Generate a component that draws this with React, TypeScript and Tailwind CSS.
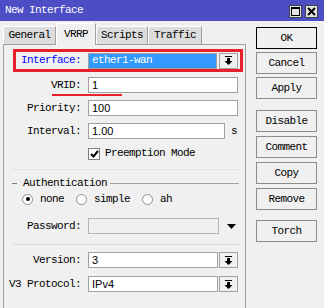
import React from 'react';

const mono = "font-['Liberation_Mono',monospace] text-[11px] tracking-[-0.6px]";
const sans = "font-['Liberation_Sans',sans-serif] text-[11px]";

const DropIcon: React.FC = () => (
    <svg width="9" height="9" viewBox="0 0 9 9">
        <rect x="1" y="0" width="7" height="1" fill="#000" />
        <rect x="3" y="2" width="3" height="3" fill="#000" />
        <polygon points="0.5,5 8.5,5 4.5,9" fill="#000" />
    </svg>
);

const DropButton: React.FC = () => (
    <div className="w-[19px] h-[16px] border border-[#a0a0a0] bg-[#f0f0f0] flex items-center justify-center shrink-0">
        <DropIcon />
    </div>
);

const Field: React.FC<{ value?: string; className?: string }> = ({ value, className }) => (
    <div className={`h-[16px] border border-[#a0a0a0] bg-white flex items-center pl-[3px] ${sans} text-black ${className ?? ''}`}>
        {value}
    </div>
);

const Row: React.FC<{ label: string; className?: string; children: React.ReactNode }> = ({ label, className, children }) => (
    <div className={`flex items-center h-[16px] ${className ?? ''}`}>
        <div className={`w-[78px] text-right pr-[1px] ${mono} text-black`}>{label}</div>
        <div className="ml-[6px] flex items-center">{children}</div>
    </div>
);

const Radio: React.FC<{ checked?: boolean; label: string }> = ({ checked, label }) => (
    <div className="flex items-center">
        <div className="w-[11px] h-[11px] rounded-full border border-[#909090] bg-white flex items-center justify-center">
            {checked && <div className="w-[4px] h-[4px] rounded-full bg-black" />}
        </div>
        <span className={`ml-[7px] ${mono} text-black`}>{label}</span>
    </div>
);

const tabs = [
    { name: 'General', w: 'w-[53px]' },
    { name: 'VRRP', w: 'w-[40px]', active: true },
    { name: 'Scripts', w: 'w-[52px]' },
    { name: 'Traffic', w: 'w-[54px]' },
];

const buttons = [
    { name: 'OK', cls: 'border-black' },
    { name: 'Cancel', cls: 'mt-[3px]' },
    { name: 'Apply', cls: 'mt-[3px]' },
    { name: 'Disable', cls: 'mt-[11px]' },
    { name: 'Comment', cls: 'mt-[4px]' },
    { name: 'Copy', cls: 'mt-[4px]' },
    { name: 'Remove', cls: 'mt-[4px]' },
    { name: 'Torch', cls: 'mt-[10px]' },
];

export default function App() {
    return (
        <div className="w-[324px] h-[308px] bg-[#f0f0f0] flex flex-col overflow-hidden">
            {/* title bar */}
            <div className="h-[21px] bg-[#4d4dc6] flex items-center pl-[5px] pr-[6px] shrink-0">
                <span className={`${mono} text-white`}>New Interface</span>
                <div className="ml-auto flex gap-[3px] mt-[1px]">
                    <div className="w-[13px] h-[13px] bg-[#e4e4e4] border border-[#404040] flex items-center justify-center">
                        <div className="w-[9px] h-[9px] border border-black border-t-2" />
                    </div>
                    <div className="w-[13px] h-[13px] bg-[#e4e4e4] border border-[#404040] flex items-center justify-center">
                        <svg width="9" height="9" viewBox="0 0 9 9">
                            <path d="M1 1 L8 8 M8 1 L1 8" stroke="#000" strokeWidth="2" />
                        </svg>
                    </div>
                </div>
            </div>

            <div className="flex flex-1 min-h-0">
                {/* left side: tabs + panel */}
                <div className="ml-[3px] w-[243px] flex flex-col pt-[2px]">
                    <div className="flex items-end h-[21px] shrink-0">
                        {tabs.map(t => (
                            <div
                                key={t.name}
                                className={`${t.w} flex items-center justify-center ${mono} text-black border-l border-t border-r ${
                                    t.active
                                        ? 'h-[22px] -mb-px relative z-10 bg-[#f0f0f0] border-l-white border-t-white border-r-[#a0a0a0]'
                                        : 'h-[18px] bg-[#dcdcdc] border-l-white border-t-white border-r-[#a0a0a0]'
                                }`}
                            >
                                {t.name}
                            </div>
                        ))}
                    </div>
                    <div className="relative flex-1 border-l border-t border-r border-l-[#a0a0a0] border-t-[#a0a0a0] border-r-[#a0a0a0] bg-[#f0f0f0] flex flex-col">
                        {/* interface row, highlighted */}
                        <div className="mt-[4px] ml-[9px] w-[230px] h-[23px] border-[3px] border-[#e8202a] flex items-center">
                            <div className={`w-[66px] text-right pr-[1px] ${mono} text-[#0000ff]`}>Interface:</div>
                            <div className={`ml-[6px] w-[129px] h-[16px] bg-[#3399ff] border border-[#a0a0a0] flex items-center pl-[3px] ${mono} text-white`}>
                                ether1-wan
                            </div>
                            <div className="ml-[2px]">
                                <DropButton />
                            </div>
                        </div>

                        <Row label="VRID:" className="mt-[5px]">
                            <Field value="1" className="w-[150px]" />
                        </Row>
                        <Row label="Priority:" className="mt-[7px]">
                            <Field value="100" className="w-[150px]" />
                        </Row>
                        <Row label="Interval:" className="mt-[7px]">
                            <Field value="1.00" className="w-[137px]" />
                            <span className={`ml-[6px] ${mono} text-black`}>s</span>
                        </Row>

                        <div className="mt-[8px] ml-[84px] flex items-center h-[13px]">
                            <div className="w-[12px] h-[12px] border border-[#808080] bg-white flex items-center justify-center">
                                <svg width="9" height="8" viewBox="0 0 9 8">
                                    <path d="M1 4 L3.5 6.5 L8 1" stroke="#000" strokeWidth="2" fill="none" />
                                </svg>
                            </div>
                            <span className={`ml-[5px] ${mono} text-black`}>Preemption Mode</span>
                        </div>

                        <div className="mt-[9px] ml-[8px] mr-[5px] h-px bg-[#e2e2e2]" />

                        {/* authentication group */}
                        <div className="mt-[7px] flex items-center h-[12px]">
                            <div className="ml-[8px] w-[5px] h-px bg-[#808080]" />
                            <span className={`ml-[6px] ${mono} text-black`}>Authentication</span>
                            <div className="ml-[3px] mr-[6px] flex-1 h-px bg-[#a0a0a0]" />
                        </div>
                        <div className="mt-[4px] ml-[18px] flex items-center gap-[12px] h-[12px]">
                            <Radio checked label="none" />
                            <Radio label="simple" />
                            <Radio label="ah" />
                        </div>
                        <Row label="Password:" className="mt-[13px]">
                            <div className="w-[131px] h-[16px] border border-[#b4b4b4] bg-[#f0f0f0]" />
                            <svg className="ml-[8px]" width="9" height="5" viewBox="0 0 9 5">
                                <polygon points="0,0 9,0 4.5,5" fill="#000" />
                            </svg>
                        </Row>

                        <div className="mt-[10px] ml-[8px] mr-[5px] h-px bg-[#dcdcdc]" />

                        <Row label="Version:" className="mt-[7px]">
                            <Field value="3" className="w-[130px]" />
                            <div className="ml-[1px]">
                                <DropButton />
                            </div>
                        </Row>
                        <Row label="V3 Protocol:" className="mt-[8px]">
                            <Field value="IPv4" className="w-[130px]" />
                            <div className="ml-[1px]">
                                <DropButton />
                            </div>
                        </Row>

                        {/* red underline annotation */}
                        <div className="absolute left-[48px] top-[49px] w-[70px] h-[2px] bg-[#e8202a]" />
                    </div>
                </div>

                {/* right button column */}
                <div className="ml-[10px] w-[61px] flex flex-col pt-[6px]">
                    {buttons.map(b => (
                        <div
                            key={b.name}
                            className={`h-[22px] border border-[#8c8c8c] bg-[#f0f0f0] flex items-center justify-center ${mono} text-black ${b.cls}`}
                        >
                            {b.name}
                        </div>
                    ))}
                </div>
            </div>
        </div>
    );
}
